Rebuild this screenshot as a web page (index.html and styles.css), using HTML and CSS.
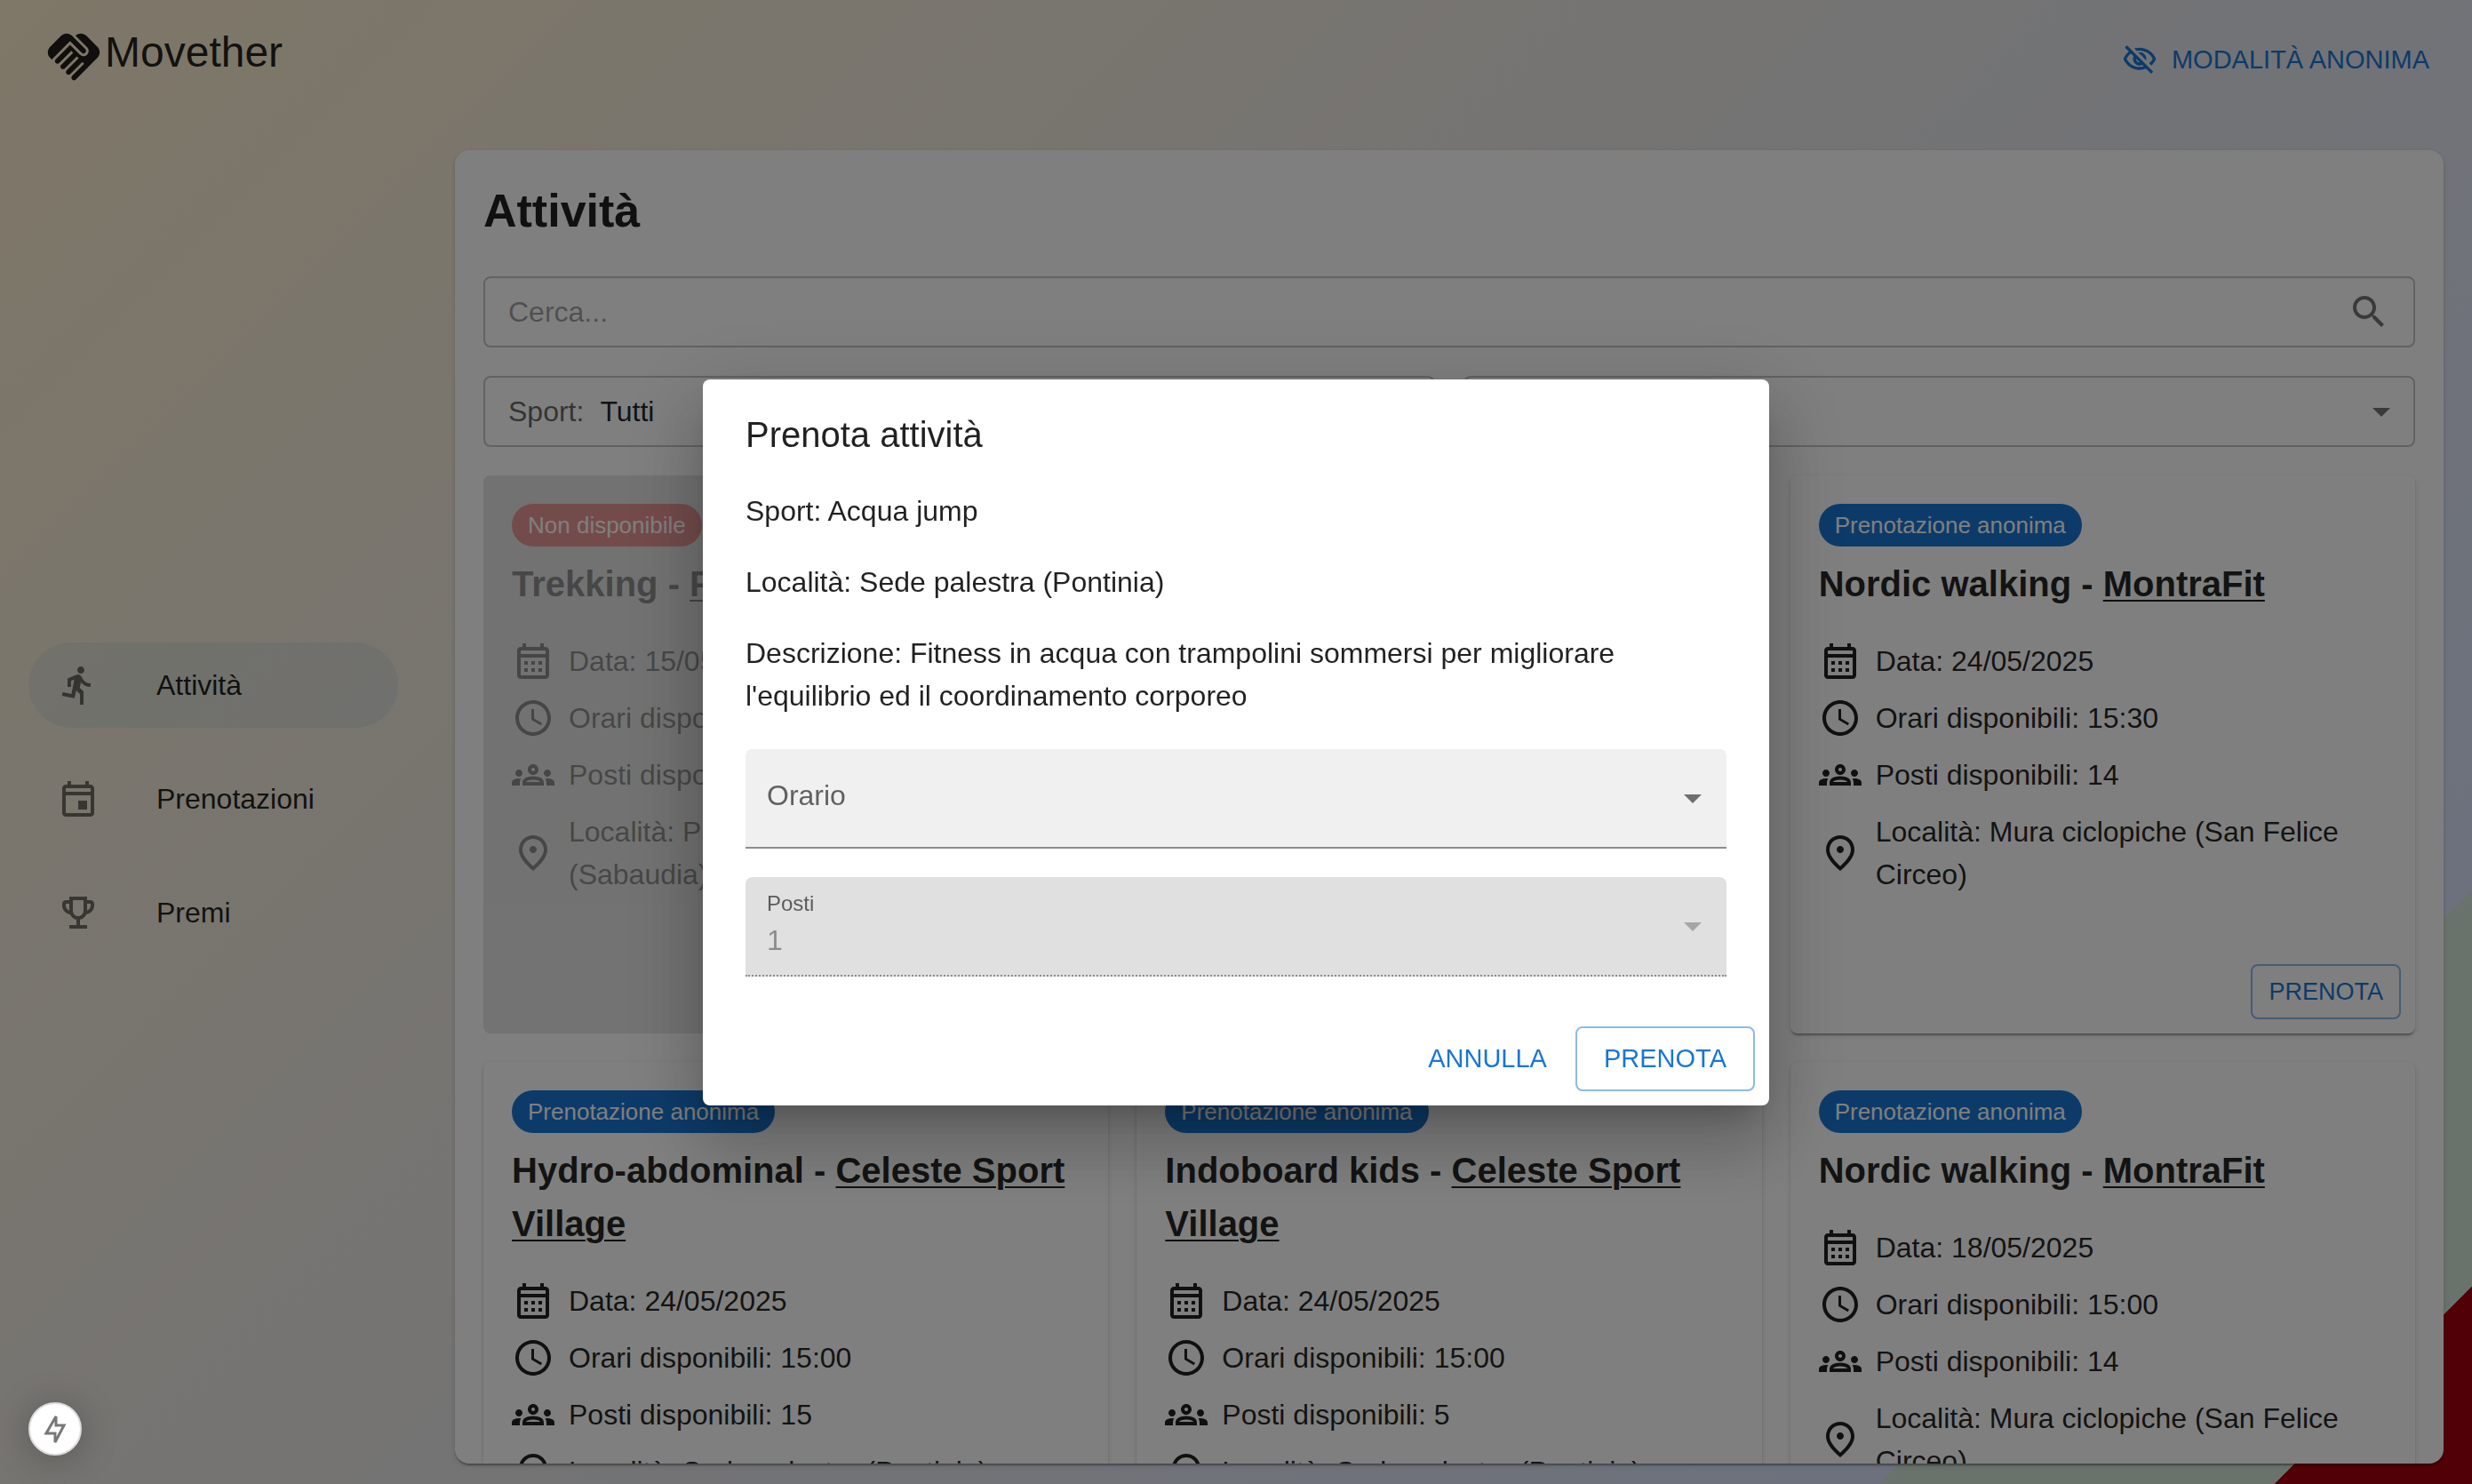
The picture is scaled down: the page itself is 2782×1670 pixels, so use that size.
FILE: index.html
```html
<!DOCTYPE html>
<html lang="it">
<head>
  <meta charset="utf-8">
  <meta name="viewport" content="width=device-width, initial-scale=1">
  <title>Movether - Attività</title>
  <link rel="stylesheet" href="styles.css">
</head>
<body>
  <svg class="sprite" aria-hidden="true">
    <symbol id="i-logo" viewBox="0 0 24 24"><path d="M16.48 10.41c-.39.39-1.04.39-1.43 0l-4.47-4.46-7.05 7.04-.66-.63c-1.17-1.17-1.17-3.07 0-4.24l4.24-4.24c1.17-1.17 3.07-1.17 4.24 0L16.48 9c.39.39.39 1.02 0 1.41zm.7-2.12c.78.78.78 2.05 0 2.83-1.27 1.27-2.61.22-2.83 0l-3.76-3.76-5.57 5.57c-.39.39-.39 1.02 0 1.41.39.39 1.02.39 1.42 0l4.62-4.62.71.71-4.62 4.62c-.39.39-.39 1.02 0 1.41.39.39 1.02.39 1.42 0l4.62-4.62.71.71-4.62 4.62c-.39.39-.39 1.02 0 1.41.39.39 1.02.39 1.41 0l4.62-4.62.71.71-4.62 4.62c-.39.39-.39 1.02 0 1.41.39.39 1.02.39 1.41 0l8.32-8.34c1.17-1.17 1.17-3.07 0-4.24l-4.24-4.24c-1.15-1.15-3.01-1.17-4.18-.06l4.47 4.47z"/></symbol>
    <symbol id="i-hidden" viewBox="0 0 24 24"><path d="M12 6c3.79 0 7.17 2.13 8.82 5.5-.59 1.22-1.42 2.27-2.41 3.12l1.41 1.41c1.39-1.23 2.49-2.77 3.18-4.53C21.27 7.11 17 4 12 4c-1.27 0-2.49.2-3.64.57l1.65 1.65C10.66 6.09 11.32 6 12 6zm-1.07 1.14L13 9.21c.57.25 1.03.71 1.28 1.28l2.07 2.07c.08-.34.14-.7.14-1.07C16.5 9.01 14.48 7 12 7c-.37 0-.72.05-1.07.14zM2.01 3.87l2.68 2.68C3.06 7.83 1.77 9.53 1 11.5 2.73 15.89 7 19 12 19c1.52 0 2.98-.29 4.32-.82l3.42 3.42 1.41-1.41L3.42 2.45 2.01 3.87zm7.5 7.5l2.61 2.61c-.04.01-.08.02-.12.02-1.38 0-2.5-1.12-2.5-2.5 0-.05.01-.08.01-.13zm-3.4-3.4l1.75 1.75c-.23.55-.36 1.15-.36 1.78 0 2.48 2.02 4.5 4.5 4.5.63 0 1.23-.13 1.77-.36l.98.98c-.88.24-1.8.38-2.75.38-3.79 0-7.17-2.13-8.82-5.5.7-1.43 1.72-2.61 2.93-3.53z"/></symbol>
    <symbol id="i-run" viewBox="0 0 24 24"><path d="M13.49 5.48c1.1 0 2-.9 2-2s-.9-2-2-2-2 .9-2 2 .9 2 2 2zm-3.6 13.9l1-4.4 2.1 2v6h2v-7.5l-2.1-2 .6-3c1.3 1.5 3.3 2.5 5.5 2.5v-2c-1.9 0-3.5-1-4.3-2.4l-1-1.6c-.4-.6-1-1-1.7-1-.3 0-.5.1-.8.1l-5.2 2.2v4.7h2v-3.4l1.8-.7-1.6 8.1-4.9-1-.4 2 7 1.4z"/></symbol>
    <symbol id="i-event" viewBox="0 0 24 24"><path d="M19 4h-1V2h-2v2H8V2H6v2H5c-1.11 0-1.99.9-1.99 2L3 20c0 1.1.89 2 2 2h14c1.1 0 2-.9 2-2V6c0-1.1-.9-2-2-2zm0 16H5V10h14v10zm0-12H5V6h14v2zm-7 5h5v5h-5z"/></symbol>
    <symbol id="i-trophy" viewBox="0 0 24 24"><path d="M19 5h-2V3H7v2H5c-1.1 0-2 .9-2 2v1c0 2.55 1.92 4.63 4.39 4.94.63 1.5 1.98 2.63 3.61 2.96V19H7v2h10v-2h-4v-3.1c1.63-.33 2.98-1.46 3.61-2.96C19.08 12.63 21 10.55 21 8V7c0-1.1-.9-2-2-2zM5 8V7h2v3.82C5.84 10.4 5 9.3 5 8zm7 6c-1.65 0-3-1.35-3-3V5h6v6c0 1.65-1.35 3-3 3zm7-6c0 1.3-.84 2.4-2 2.82V7h2v1z"/></symbol>
    <symbol id="i-calendar" viewBox="0 0 24 24"><path d="M19 4h-1V2h-2v2H8V2H6v2H5c-1.11 0-1.99.9-1.99 2L3 20c0 1.1.89 2 2 2h14c1.1 0 2-.9 2-2V6c0-1.1-.9-2-2-2zm0 16H5V10h14v10zm0-12H5V6h14v2zM9 14H7v-2h2v2zm4 0h-2v-2h2v2zm4 0h-2v-2h2v2zm-8 4H7v-2h2v2zm4 0h-2v-2h2v2zm4 0h-2v-2h2v2z"/></symbol>
    <symbol id="i-clock" viewBox="0 0 24 24"><path d="M11.99 2C6.47 2 2 6.48 2 12s4.47 10 9.99 10C17.52 22 22 17.52 22 12S17.52 2 11.99 2zM12 20c-4.42 0-8-3.58-8-8s3.58-8 8-8 8 3.58 8 8-3.58 8-8 8zm.5-13H11v6l5.25 3.15.75-1.23-4.5-2.67z"/></symbol>
    <symbol id="i-groups" viewBox="0 0 24 24"><path d="M4 13c1.1 0 2-.9 2-2s-.9-2-2-2-2 .9-2 2 .9 2 2 2zm1.13 1.1c-.37-.06-.74-.1-1.13-.1-.99 0-1.93.21-2.78.58C.48 14.9 0 15.62 0 16.43V18h4.5v-1.61c0-.83.23-1.61.63-2.29zM20 13c1.1 0 2-.9 2-2s-.9-2-2-2-2 .9-2 2 .9 2 2 2zm4 3.43c0-.81-.48-1.53-1.22-1.85-.85-.37-1.79-.58-2.78-.58-.39 0-.76.04-1.13.1.4.68.63 1.46.63 2.29V18H24v-1.57zm-7.76-2.78c-1.17-.52-2.61-.9-4.24-.9s-3.07.39-4.24.9C6.68 14.13 6 15.21 6 16.39V18h12v-1.61c0-1.18-.68-2.26-1.76-2.74zM8.07 16c.09-.23.13-.39.91-.69.97-.38 1.99-.56 3.02-.56s2.05.18 3.02.56c.77.3.81.46.91.69H8.07zM12 8c.55 0 1 .45 1 1s-.45 1-1 1-1-.45-1-1 .45-1 1-1m0-2c-1.66 0-3 1.34-3 3s1.34 3 3 3 3-1.34 3-3-1.34-3-3-3z"/></symbol>
    <symbol id="i-pin" viewBox="0 0 24 24"><path d="M12 12c-1.1 0-2-.9-2-2s.9-2 2-2 2 .9 2 2-.9 2-2 2zm6-1.8C18 6.57 15.35 4 12 4s-6 2.57-6 6.2c0 2.34 1.95 5.44 6 9.14 4.05-3.7 6-6.8 6-9.14zM12 2c4.2 0 8 3.22 8 8.2 0 3.32-2.67 7.25-8 11.8-5.33-4.55-8-8.48-8-11.8C4 5.22 7.8 2 12 2z"/></symbol>
    <symbol id="i-search" viewBox="0 0 24 24"><path d="M15.5 14h-.79l-.28-.27C15.41 12.59 16 11.11 16 9.5 16 5.91 13.09 3 9.5 3S3 5.91 3 9.5 5.91 16 9.5 16c1.61 0 3.09-.59 4.23-1.57l.27.28v.79l5 4.99L20.49 19l-4.99-5zm-6 0C7.01 14 5 11.99 5 9.5S7.01 5 9.5 5 14 7.01 14 9.5 11.99 14 9.5 14z"/></symbol>
    <symbol id="i-arrow" viewBox="0 0 24 24"><path d="M7 10l5 5 5-5z"/></symbol>
  </svg>

  <div class="app">
    <header class="topbar">
      <div class="brand"><svg class="brand-logo"><use href="#i-logo"/></svg><span class="brand-name">Movether</span></div>
      <button class="btn btn-anonymous" type="button"><svg class="btn-icon"><use href="#i-hidden"/></svg>MODALITÀ ANONIMA</button>
    </header>

    <nav class="sidebar">
      <a class="nav-item nav-item-active" href="#attivita"><svg class="icon"><use href="#i-run"/></svg>Attività</a>
      <a class="nav-item" href="#prenotazioni"><svg class="icon"><use href="#i-event"/></svg>Prenotazioni</a>
      <a class="nav-item" href="#premi"><svg class="icon"><use href="#i-trophy"/></svg>Premi</a>
    </nav>

    <main class="panel">
      <h1 class="panel-title">Attività</h1>

      <div class="outlined search">
        <input class="search-input" type="search" placeholder="Cerca..." aria-label="Cerca">
        <svg class="icon"><use href="#i-search"/></svg>
      </div>

      <div class="filters">
        <div class="outlined filter">
          <label for="filter-sport">Sport:</label>
          <select id="filter-sport" class="filter-select"><option>Tutti</option></select>
          <svg class="icon select-arrow"><use href="#i-arrow"/></svg>
        </div>
        <div class="outlined filter">
          <label for="filter-place">Località:</label>
          <select id="filter-place" class="filter-select"><option>Tutte</option></select>
          <svg class="icon select-arrow"><use href="#i-arrow"/></svg>
        </div>
      </div>

      <div class="cards">
        <article class="card card-disabled">
          <span class="chip chip-error">Non disponibile</span>
          <h2 class="card-title">Trekking - <a href="#palestra">ProFit</a></h2>
          <ul class="facts">
            <li><svg class="icon"><use href="#i-calendar"/></svg><span>Data: 15/05/2025</span></li>
            <li><svg class="icon"><use href="#i-clock"/></svg><span>Orari disponibili: 15:00</span></li>
            <li><svg class="icon"><use href="#i-groups"/></svg><span>Posti disponibili: 0</span></li>
            <li><svg class="icon"><use href="#i-pin"/></svg><span>Località: Parco del Circeo<br>(Sabaudia)</span></li>
          </ul>
        </article>

        <article class="card">
          <span class="chip">Prenotazione anonima</span>
          <h2 class="card-title">Acqua jump - <a href="#celeste">Celeste Sport Village</a></h2>
          <ul class="facts">
            <li><svg class="icon"><use href="#i-calendar"/></svg><span>Data: 24/05/2025</span></li>
            <li><svg class="icon"><use href="#i-clock"/></svg><span>Orari disponibili: 15:00</span></li>
            <li><svg class="icon"><use href="#i-groups"/></svg><span>Posti disponibili: 15</span></li>
            <li><svg class="icon"><use href="#i-pin"/></svg><span>Località: Sede palestra (Pontinia)</span></li>
          </ul>
        </article>

        <article class="card">
          <span class="chip">Prenotazione anonima</span>
          <h2 class="card-title">Nordic walking - <a href="#montrafit">MontraFit</a></h2>
          <ul class="facts">
            <li><svg class="icon"><use href="#i-calendar"/></svg><span>Data: 24/05/2025</span></li>
            <li><svg class="icon"><use href="#i-clock"/></svg><span>Orari disponibili: 15:30</span></li>
            <li><svg class="icon"><use href="#i-groups"/></svg><span>Posti disponibili: 14</span></li>
            <li><svg class="icon"><use href="#i-pin"/></svg><span>Località: Mura ciclopiche (San Felice Circeo)</span></li>
          </ul>
          <div class="card-actions"><button class="btn btn-outlined btn-small" type="button">PRENOTA</button></div>
        </article>

        <article class="card">
          <span class="chip">Prenotazione anonima</span>
          <h2 class="card-title">Hydro-abdominal - <a href="#celeste">Celeste Sport Village</a></h2>
          <ul class="facts">
            <li><svg class="icon"><use href="#i-calendar"/></svg><span>Data: 24/05/2025</span></li>
            <li><svg class="icon"><use href="#i-clock"/></svg><span>Orari disponibili: 15:00</span></li>
            <li><svg class="icon"><use href="#i-groups"/></svg><span>Posti disponibili: 15</span></li>
            <li><svg class="icon"><use href="#i-pin"/></svg><span>Località: Sede palestra (Pontinia)</span></li>
          </ul>
        </article>

        <article class="card">
          <span class="chip">Prenotazione anonima</span>
          <h2 class="card-title">Indoboard kids - <a href="#celeste">Celeste Sport Village</a></h2>
          <ul class="facts">
            <li><svg class="icon"><use href="#i-calendar"/></svg><span>Data: 24/05/2025</span></li>
            <li><svg class="icon"><use href="#i-clock"/></svg><span>Orari disponibili: 15:00</span></li>
            <li><svg class="icon"><use href="#i-groups"/></svg><span>Posti disponibili: 5</span></li>
            <li><svg class="icon"><use href="#i-pin"/></svg><span>Località: Sede palestra (Pontinia)</span></li>
          </ul>
        </article>

        <article class="card">
          <span class="chip">Prenotazione anonima</span>
          <h2 class="card-title">Nordic walking - <a href="#montrafit">MontraFit</a></h2>
          <ul class="facts">
            <li><svg class="icon"><use href="#i-calendar"/></svg><span>Data: 18/05/2025</span></li>
            <li><svg class="icon"><use href="#i-clock"/></svg><span>Orari disponibili: 15:00</span></li>
            <li><svg class="icon"><use href="#i-groups"/></svg><span>Posti disponibili: 14</span></li>
            <li><svg class="icon"><use href="#i-pin"/></svg><span>Località: Mura ciclopiche (San Felice Circeo)</span></li>
          </ul>
        </article>
      </div>
    </main>
  </div>

  <div class="backdrop">
    <section class="dialog" role="dialog" aria-modal="true" aria-labelledby="dialog-title">
      <h2 class="dialog-title" id="dialog-title">Prenota attività</h2>
      <div class="dialog-content">
        <p>Sport: Acqua jump</p>
        <p>Località: Sede palestra (Pontinia)</p>
        <p>Descrizione: Fitness in acqua con trampolini sommersi per migliorare l'equilibrio ed il coordinamento corporeo</p>
        <div class="fields">
          <div class="field">
            <label class="field-label" for="orario">Orario</label>
            <select class="field-select" id="orario"><option value=""></option></select>
            <svg class="icon select-arrow"><use href="#i-arrow"/></svg>
          </div>
          <div class="field field-disabled">
            <label class="field-label field-label-small" for="posti">Posti</label>
            <select class="field-select" id="posti" disabled><option>1</option></select>
            <svg class="icon select-arrow"><use href="#i-arrow"/></svg>
          </div>
        </div>
      </div>
      <div class="dialog-actions">
        <button class="btn" type="button">ANNULLA</button>
        <button class="btn btn-outlined" type="button">PRENOTA</button>
      </div>
    </section>
  </div>

  <button class="dev-badge" type="button" aria-label="Stato">
    <svg class="dev-bolt" viewBox="0 0 60 60"><path d="M31 16V26H40L30 45V35H20Z"/></svg>
  </button>
</body>
</html>
```

FILE: styles.css
```css
:root {
  --text: rgba(0, 0, 0, .87);
  --muted: rgba(0, 0, 0, .6);
  --icon: rgba(0, 0, 0, .54);
  --primary: #1976d2;
}

*, *::before, *::after { box-sizing: border-box; }

body {
  margin: 0;
  font: 32px/48px "Liberation Sans", Helvetica, Arial, sans-serif;
  color: var(--text);
}

h1, h2, p, ul { margin: 0; padding: 0; }
ul { list-style: none; }
a { color: inherit; }
input, select, button { font: inherit; color: inherit; }
svg { display: block; flex: none; fill: currentColor; }

.sprite { display: none; }
.icon { width: 48px; height: 48px; }

/* Page frame */
.app {
  display: grid;
  grid-template-columns: 480px minmax(0, 1fr);
  grid-template-rows: 128px minmax(0, 1fr);
  height: 100vh;
  overflow: hidden;
  background: linear-gradient(135deg, #feefd0 0%, #d9e3fb 85%, #d2e6d8 85%, #d2e6d8 95%, #a4000e 95%);
}

.topbar {
  grid-column: 1 / -1;
  display: flex;
  align-items: flex-start;
  justify-content: space-between;
  padding: 29px 32px 0 48px;
}

.brand { display: flex; }
.brand-logo { width: 70px; height: 70px; }
.brand-name { font-size: 48px; line-height: 60px; }

.sidebar {
  display: flex;
  flex-direction: column;
  justify-content: center;
  gap: 32px;
  padding: 0 32px;
}

.nav-item {
  display: flex;
  align-items: center;
  gap: 64px;
  height: 96px;
  padding: 0 32px;
  border-radius: 48px;
  text-decoration: none;
}
.nav-item .icon { color: var(--icon); }
.nav-item-active { background: rgba(25, 118, 210, .08); }

.panel {
  display: flex;
  flex-direction: column;
  gap: 32px;
  margin: 41px 32px 23px;
  padding: 32px 32px 0;
  overflow: hidden;
  border-radius: 16px;
  background: #fff;
  box-shadow: 0 4px 2px -2px rgba(0, 0, 0, .2), 0 2px 2px rgba(0, 0, 0, .14), 0 2px 6px rgba(0, 0, 0, .12);
}
.panel-title { padding-bottom: 6px; font-size: 52px; line-height: 72px; }

/* Buttons */
.btn {
  display: inline-flex;
  align-items: center;
  justify-content: center;
  height: 73px;
  padding: 0 16px;
  border: 0;
  border-radius: 8px;
  background: none;
  color: var(--primary);
  font-size: 29px;
}
.btn-outlined { padding: 0 30px; border: 2px solid rgba(25, 118, 210, .5); }
.btn-small { height: 62px; padding: 0 18px; font-size: 27px; }
.btn-anonymous { height: 76px; gap: 16px; }
.btn-icon { width: 40px; height: 40px; }

/* Search and filters */
.outlined {
  position: relative;
  display: flex;
  flex: none;
  align-items: center;
  height: 80px;
  padding: 0 26px;
  border: 2px solid rgba(0, 0, 0, .23);
  border-radius: 8px;
  color: var(--icon);
}
.search-input {
  flex: 1;
  min-width: 0;
  padding: 0;
  border: 0;
  outline: 0;
  background: none;
  appearance: none;
}
.search-input::placeholder { color: rgba(0, 0, 0, .38); opacity: 1; }

.filters { display: grid; grid-template-columns: 1fr 1fr; gap: 32px; }
.filter { gap: 18px; color: var(--muted); }
.filter-select {
  flex: 1;
  height: 76px;
  padding: 0;
  border: 0;
  background: none;
  appearance: none;
  color: var(--text);
}
.select-arrow {
  position: absolute;
  top: 50%;
  right: 12px;
  margin-top: -24px;
  color: var(--icon);
  pointer-events: none;
}

/* Activity cards */
.cards { display: grid; grid-template-columns: repeat(3, minmax(0, 1fr)); gap: 32px; }
.card {
  display: flex;
  flex-direction: column;
  align-items: flex-start;
  min-height: 628px;
  padding: 32px 32px 16px;
  border-radius: 8px;
  background: #fff;
  box-shadow: 0 4px 2px -2px rgba(0, 0, 0, .2), 0 2px 2px rgba(0, 0, 0, .14), 0 2px 6px rgba(0, 0, 0, .12);
}
.card-disabled { background: #cdcdcd; opacity: .5; box-shadow: none; }
.chip {
  padding: 0 18px;
  border-radius: 24px;
  background: var(--primary);
  color: #fff;
  font-size: 26px;
}
.chip-error { background: #d32f2f; }
.card-title { margin-top: 12px; font-size: 40px; line-height: 60px; }
.card-title a { text-decoration-thickness: 2px; text-underline-offset: 4px; }
.facts { display: grid; gap: 16px; margin-top: 33px; }
.facts li { display: flex; align-items: center; gap: 16px; }
.card-actions { align-self: flex-end; margin: auto -16px 0 0; display: flex; }

/* Booking dialog */
.backdrop {
  position: fixed;
  inset: 0;
  display: flex;
  align-items: center;
  justify-content: center;
  background: rgba(0, 0, 0, .5);
}
.dialog {
  width: 1200px;
  max-width: calc(100% - 128px);
  border-radius: 8px;
  background: #fff;
  box-shadow: 0 22px 30px -14px rgba(0, 0, 0, .2), 0 48px 76px 6px rgba(0, 0, 0, .14), 0 18px 92px 16px rgba(0, 0, 0, .12);
}
.dialog-title { padding: 32px 48px; font-size: 40px; font-weight: 400; line-height: 60px; }
.dialog-content { display: flex; flex-direction: column; gap: 32px; padding: 0 48px 40px; }
.dialog-actions { display: flex; justify-content: flex-end; gap: 16px; padding: 16px; }

.fields { display: grid; gap: 32px; padding-top: 4px; }
.field {
  position: relative;
  height: 112px;
  border-bottom: 2px solid #8c8c8c;
  border-radius: 8px 8px 0 0;
  background: #f0f0f0;
}
.field .select-arrow { right: 14px; }
.field-label {
  position: absolute;
  top: 28px;
  left: 24px;
  color: var(--muted);
  pointer-events: none;
}
.field-label-small { top: 6px; font-size: 24px; }
.field-select {
  width: 100%;
  height: 110px;
  padding: 32px 24px 0;
  border: 0;
  background: none;
  appearance: none;
}
.field-disabled { border-bottom-style: dotted; background: #e0e0e0; }
.field-disabled .field-select { color: rgba(0, 0, 0, .38); opacity: 1; }
.field-disabled .select-arrow { color: rgba(0, 0, 0, .26); }

/* Floating status badge */
.dev-badge {
  position: fixed;
  bottom: 32px;
  left: 32px;
  width: 60px;
  height: 60px;
  padding: 0;
  border: 2px solid #dcdcdc;
  border-radius: 50%;
  background: #fff;
  box-shadow: 0 4px 40px rgba(0, 0, 0, .25);
}
.dev-bolt {
  width: 60px;
  height: 60px;
  margin: -2px;
  fill: none;
  stroke: #777;
  stroke-width: 3;
  stroke-miterlimit: 3;
}
```
